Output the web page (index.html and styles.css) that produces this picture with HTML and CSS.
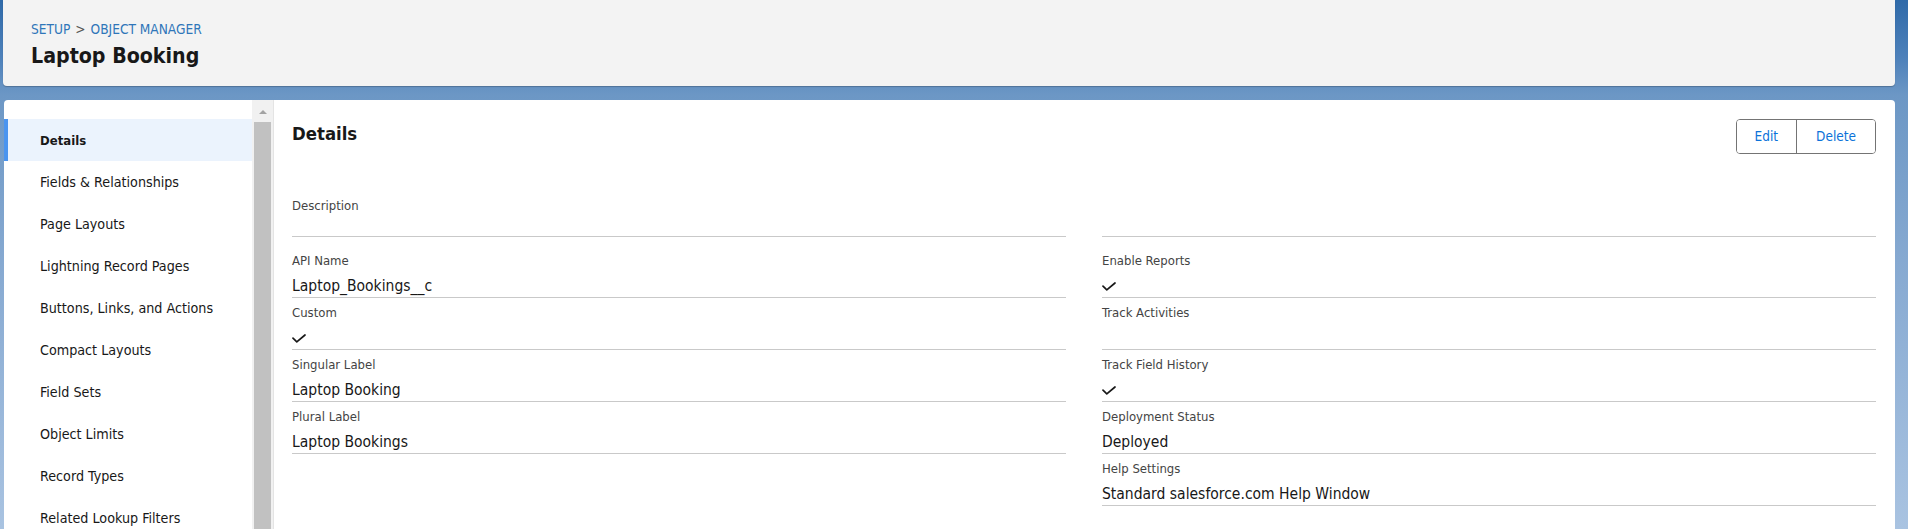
FILE: index.html
```html
<!DOCTYPE html>
<html lang="en">
<head>
<meta charset="utf-8">
<title>Laptop Booking | Object Manager</title>
<link rel="stylesheet" href="styles.css">
</head>
<body>
  <header class="page-header">
    <nav class="breadcrumb">
      <a class="crumb" href="#">SETUP</a>
      <span class="crumb-sep">&gt;</span>
      <a class="crumb" href="#">OBJECT MANAGER</a>
    </nav>
    <h1 class="page-title">Laptop Booking</h1>
  </header>

  <main class="card">
    <aside class="sidebar">
      <ul class="nav-list">
        <li class="nav-item is-active">Details</li>
        <li class="nav-item">Fields &amp; Relationships</li>
        <li class="nav-item">Page Layouts</li>
        <li class="nav-item">Lightning Record Pages</li>
        <li class="nav-item">Buttons, Links, and Actions</li>
        <li class="nav-item">Compact Layouts</li>
        <li class="nav-item">Field Sets</li>
        <li class="nav-item">Object Limits</li>
        <li class="nav-item">Record Types</li>
        <li class="nav-item">Related Lookup Filters</li>
      </ul>
      <div class="scrollbar">
        <span class="scroll-arrow"></span>
        <span class="scroll-thumb"></span>
      </div>
    </aside>

    <section class="content">
      <div class="content-head">
        <h2 class="content-title">Details</h2>
        <div class="btn-group">
          <button class="btn">Edit</button>
          <button class="btn btn-last">Delete</button>
        </div>
      </div>

      <div class="fields">
        <div class="field field-first">
          <div class="field-label">Description</div>
          <div class="field-value field-value-empty"></div>
        </div>
        <div class="field field-first">
          <div class="field-label"></div>
          <div class="field-value field-value-empty"></div>
        </div>

        <div class="field">
          <div class="field-label">API Name</div>
          <div class="field-value">Laptop_Bookings__c</div>
        </div>
        <div class="field">
          <div class="field-label">Enable Reports</div>
          <div class="field-value"><svg class="check" viewBox="0 0 14 9" width="14" height="9"><polyline points="1,4.2 4.8,7.8 13,1" /></svg></div>
        </div>

        <div class="field">
          <div class="field-label">Custom</div>
          <div class="field-value"><svg class="check" viewBox="0 0 14 9" width="14" height="9"><polyline points="1,4.2 4.8,7.8 13,1" /></svg></div>
        </div>
        <div class="field">
          <div class="field-label">Track Activities</div>
          <div class="field-value"></div>
        </div>

        <div class="field">
          <div class="field-label">Singular Label</div>
          <div class="field-value">Laptop Booking</div>
        </div>
        <div class="field">
          <div class="field-label">Track Field History</div>
          <div class="field-value"><svg class="check" viewBox="0 0 14 9" width="14" height="9"><polyline points="1,4.2 4.8,7.8 13,1" /></svg></div>
        </div>

        <div class="field">
          <div class="field-label">Plural Label</div>
          <div class="field-value">Laptop Bookings</div>
        </div>
        <div class="field">
          <div class="field-label">Deployment Status</div>
          <div class="field-value">Deployed</div>
        </div>

        <div class="field field-blank"></div>
        <div class="field">
          <div class="field-label">Help Settings</div>
          <div class="field-value">Standard salesforce.com Help Window</div>
        </div>
      </div>
    </section>
  </main>
</body>
</html>
```
FILE: styles.css
```css
* { box-sizing: border-box; }

html, body { height: 100%; }

body {
  margin: 0;
  padding: 0 13px 0 3px;
  display: flex;
  flex-direction: column;
  overflow: hidden;
  font-family: "DejaVu Sans Condensed", "DejaVu Sans", sans-serif;
  color: #181818;
  background: linear-gradient(180deg, #2f6aa9 0px, #4f82bb 60px, #6c97c5 95px, #86a9d1 260px, #a9c3e1 529px);
}

/* ---------- header ---------- */
.page-header {
  flex: none;
  height: 86px;
  padding: 20px 28px 0 28px;
  background: #f3f3f3;
  border-radius: 0 0 4px 4px;
  box-shadow: 0 1px 1px rgba(0, 0, 0, 0.22);
}

.breadcrumb {
  font-size: 13.6px;
  line-height: 18px;
  display: flex;
  gap: 5px;
}

.crumb { color: #2f76b9; text-decoration: none; }
.crumb-sep { color: #555; }

.page-title {
  margin: 5px 0 0;
  font-size: 21.2px;
  line-height: 26px;
  font-weight: 700;
  color: #181818;
}

/* ---------- card ---------- */
.card {
  flex: 1;
  min-height: 0;
  margin: 14px 0 0 1px;
  display: flex;
  background: #fff;
  border-radius: 4px 4px 0 0;
  overflow: hidden;
}

/* ---------- sidebar ---------- */
.sidebar {
  flex: none;
  display: flex;
  border-right: 1px solid #e4e4e4;
}

.nav-list {
  list-style: none;
  margin: 0;
  padding: 19px 0 0;
  width: 248px;
  overflow: hidden;
}

.nav-item {
  height: 42px;
  display: flex;
  align-items: center;
  padding-left: 32px;
  border-left: 4px solid transparent;
  font-size: 14.2px;
  color: #181818;
  white-space: nowrap;
}

.nav-item.is-active {
  background: #ebf3fd;
  border-left-color: #4a94ef;
  font-weight: 700;
  font-size: 13px;
}

.scrollbar {
  width: 21px;
  background: #f1f1f1;
  display: flex;
  flex-direction: column;
  align-items: center;
}

.scroll-arrow {
  margin-top: 10px;
  width: 0;
  height: 0;
  border-left: 4px solid transparent;
  border-right: 4px solid transparent;
  border-bottom: 4px solid #a3a3a3;
}

.scroll-thumb {
  margin-top: 8px;
  width: 17px;
  flex: 1;
  background: #c1c1c1;
}

/* ---------- content ---------- */
.content {
  flex: 1;
  min-width: 0;
  padding: 19px 19px 0 18px;
}

.content-head {
  display: flex;
  justify-content: space-between;
  align-items: flex-start;
  height: 35px;
}

.content-title {
  margin: 3px 0 0;
  font-size: 18.4px;
  line-height: 24px;
  font-weight: 700;
  color: #181818;
}

.btn-group {
  display: flex;
  height: 35px;
  border: 1px solid #747474;
  border-radius: 4px;
  overflow: hidden;
}

.btn {
  margin: 0;
  padding: 0 18px;
  border: 0;
  background: #fff;
  color: #0b72d9;
  font-family: inherit;
  font-size: 13.5px;
  line-height: 33px;
}

.btn-last {
  padding: 0 19px;
  border-left: 1px solid #747474;
}

.fields {
  margin-top: 37px;
  display: grid;
  grid-template-columns: 1fr 1fr;
  column-gap: 36px;
}

.field {
  padding-top: 6px;
  border-bottom: 1px solid #c9c9c9;
  height: 52px;
}

.field-first {
  height: 46px;
  margin-bottom: 9px;
}

.field-blank { border-bottom: 0; }

.field-label {
  height: 18px;
  font-size: 13px;
  line-height: 18px;
  color: #444;
  white-space: nowrap;
}

.field-value {
  margin-top: 5px;
  height: 22px;
  font-size: 15.5px;
  line-height: 22px;
  color: #181818;
  white-space: nowrap;
  display: flex;
  align-items: center;
}

.field-value-empty { height: 16px; }

.check {
  display: block;
  fill: none;
  stroke: #181818;
  stroke-width: 1.7;
  stroke-linecap: round;
  stroke-linejoin: round;
}
```
